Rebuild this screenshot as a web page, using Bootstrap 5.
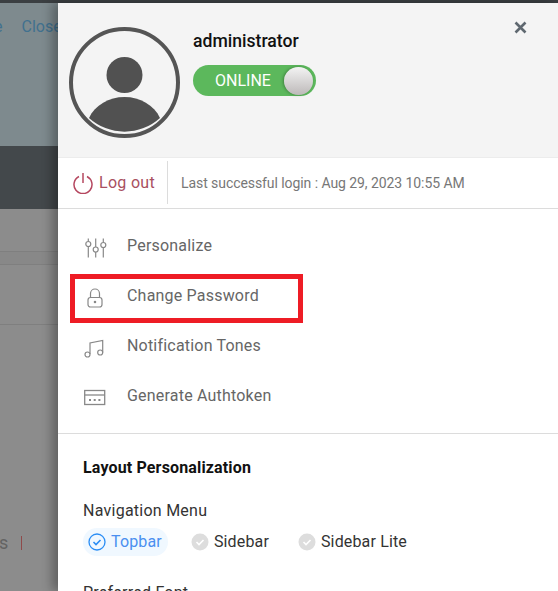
<!DOCTYPE html>
<html lang="en">
<head>
  <meta charset="UTF-8">
  <title>Profile</title>
  <link href="https://cdn.jsdelivr.net/npm/bootstrap@5.3.0/dist/css/bootstrap.min.css" rel="stylesheet">
  <style>
    html, body {
      height: 591px;
      overflow: hidden;
    }

    body {
      font-family: Roboto, "Liberation Sans", sans-serif;
      background-color: #8c8c8c;
    }

    .top-strip {
      height: 3px;
      background-color: #3b3f42;
    }

    .page-shell {
      height: 588px;
    }

    .behind {
      width: 58px;
      flex: none;
      overflow: hidden;
    }

    .behind-head {
      height: 143px;
      background-color: #7e8a8e;
      padding-top: 13px;
      font-size: 16px;
      line-height: 22px;
      color: #41718f;
      white-space: nowrap;
    }

    .behind-head span {
      margin-left: -6px;
      margin-right: 19px;
    }

    .behind-dark {
      height: 63px;
      background-color: #43484b;
    }

    .behind-row {
      height: 42px;
    }

    .behind-line {
      height: 14px;
      border-top: 1px solid #7f7f7f;
      background-color: #888;
      border-bottom: 1px solid #7f7f7f;
    }

    .behind-gap {
      height: 60px;
      border-bottom: 1px solid #7f7f7f;
    }

    .behind-foot {
      padding-top: 208px;
      font-size: 18px;
      line-height: 20px;
      color: #636363;
      white-space: nowrap;
    }

    .behind-foot span {
      margin-left: -1px;
      margin-right: 13px;
    }

    .behind-foot i {
      display: inline-block;
      width: 1px;
      height: 14px;
      background-color: #8f4a4a;
      vertical-align: -1px;
    }

    .panel-side {
      box-shadow: -6px 0 10px rgba(0, 0, 0, .3);
      position: relative;
    }

    .panel-head {
      height: 155px;
      background-color: #f4f4f4;
      border-bottom: 1px solid #ececec;
      padding: 24px 0 0 11px;
    }

    .user-pic {
      width: 111px;
      height: 111px;
      flex: none;
    }

    .user-info {
      margin-left: 13px;
      padding-top: 3px;
    }

    .user-name {
      font-size: 17.6px;
      line-height: 22px;
      font-weight: 500;
      color: #111;
    }

    .online-switch {
      width: 123px;
      height: 31px;
      margin-top: 13px;
      border-radius: 16px;
      background-color: #5cb85c;
      color: #fff;
      font-size: 16px;
      line-height: 31px;
      padding-left: 22px;
      position: relative;
    }

    .switch-knob {
      position: absolute;
      top: 2px;
      right: 3px;
      width: 29px;
      height: 28px;
      border-radius: 50%;
      background: linear-gradient(#f3f3f3, #bdb9b9);
      box-shadow: -1px 0 3px rgba(0, 0, 0, .3);
    }

    .panel-close {
      position: absolute;
      top: 18px;
      right: 31px;
      width: 13px;
      height: 13px;
    }

    .logout-bar {
      height: 51px;
      border-bottom: 1px solid #dcdcdc;
    }

    .logout-link {
      width: 110px;
      height: 43px;
      margin-top: 3px;
      padding-left: 15px;
      border-right: 1px solid #dcdcdc;
      color: #a9505f;
      font-size: 16px;
      letter-spacing: .3px;
      gap: 6px;
    }

    .last-login {
      margin-left: 13px;
      font-size: 14px;
      letter-spacing: -.07px;
      color: #777;
    }

    .menu-block {
      height: 225px;
      padding-top: 12px;
      border-bottom: 1px solid #dcdcdc;
    }

    .menu-row {
      height: 50px;
      padding-left: 26px;
      color: #666;
      font-size: 16px;
      letter-spacing: .2px;
    }

    .menu-ico {
      width: 23px;
      height: 23px;
      margin-right: 20px;
      flex: none;
    }

    .red-mark {
      position: absolute;
      left: 12px;
      top: 271px;
      width: 233px;
      height: 49px;
      border: 5px solid #ee1c25;
    }

    .layout-block {
      padding: 23px 0 0 25px;
    }

    .layout-title {
      font-size: 16px;
      line-height: 22px;
      font-weight: 700;
      letter-spacing: .15px;
      color: #111;
    }

    .field-label {
      font-size: 16px;
      line-height: 22px;
      letter-spacing: .25px;
      color: #333;
      margin-top: 21px;
    }

    .choice-row {
      margin-top: 6px;
    }

    .choice {
      height: 28px;
      padding: 0 6px 0 5px;
      font-size: 16px;
      letter-spacing: .15px;
      color: #333;
      gap: 5px;
      border-radius: 14px;
    }

    .choice.picked {
      background-color: #f0f8ff;
      color: #4a8ff0;
    }

    .choice svg {
      width: 18px;
      height: 18px;
      flex: none;
    }

    .choice-row .choice + .choice {
      margin-left: 18px;
    }

    .field-next {
      margin-top: 26px;
    }
  </style>
</head>
<body>
  <div class="top-strip"></div>
  <div class="page-shell d-flex">
    <div class="behind">
      <div class="behind-head"><span>e</span>Close</div>
      <div class="behind-dark"></div>
      <div class="behind-row"></div>
      <div class="behind-line"></div>
      <div class="behind-gap"></div>
      <div class="behind-foot"><span>s</span><i></i></div>
    </div>
    <div class="panel-side flex-grow-1 bg-white">
      <div class="panel-head d-flex">
        <svg class="user-pic" viewBox="0 0 111 111">
          <circle cx="55.5" cy="55.5" r="53.5" fill="none" stroke="#555" stroke-width="4"/>
          <circle cx="55.5" cy="48" r="18" fill="#515151"/>
          <path d="M20 91C26 78 40 70 55.500 70S85 78 91 91A53 53 0 0 1 20 91Z" fill="#515151"/>
        </svg>
        <div class="user-info">
          <div class="user-name">administrator</div>
          <div class="online-switch">ONLINE<span class="switch-knob"></span></div>
        </div>
      </div>
      <svg class="panel-close" viewBox="0 0 13 13">
        <path d="M1.500 1.500L11.500 11.500M11.500 1.500L1.500 11.500" stroke="#5f6870" stroke-width="2.600" fill="none"/>
      </svg>
      <div class="logout-bar d-flex">
        <div class="logout-link d-flex align-items-center">
          <svg width="20" height="22" viewBox="0 0 20 22" fill="none" stroke="#b5475f" stroke-width="1.500">
            <path d="M6 4.500A9 9 0 1 0 14 4.500"/>
            <path d="M10 1V11"/>
          </svg>
          <span>Log out</span>
        </div>
        <div class="last-login d-flex align-items-center">Last successful login : Aug 29, 2023 10:55 AM</div>
      </div>
      <div class="menu-block">
        <div class="menu-row d-flex align-items-center">
          <svg class="menu-ico" viewBox="0 0 23 23" fill="none" stroke="#888" stroke-width="1.200">
            <path d="M4.300 3.500V6.500M4.300 11.500V22.500M11.700 3.500V12M11.700 17V22.500M19.300 3.500V7.500M19.300 12.500V22.500"/>
            <circle cx="4.300" cy="9" r="2.500"/>
            <circle cx="11.700" cy="14.500" r="2.500"/>
            <circle cx="19.300" cy="10" r="2.500"/>
          </svg>
          <span>Personalize</span>
        </div>
        <div class="menu-row d-flex align-items-center">
          <svg class="menu-ico" viewBox="0 0 23 23" fill="none" stroke="#888" stroke-width="1.200">
            <rect x="4" y="12.500" width="14" height="9.500" rx="2.500"/>
            <path d="M6.500 12.500V8.500A4.500 4.500 0 0 1 15.500 8.500V12.500"/>
            <circle cx="11" cy="17" r=".7" fill="#888"/>
          </svg>
          <span>Change Password</span>
        </div>
        <div class="menu-row d-flex align-items-center">
          <svg class="menu-ico" viewBox="0 0 23 23" fill="none" stroke="#888" stroke-width="1.200">
            <path d="M6 19V8L18.700 5.500V17.500"/>
            <circle cx="3.500" cy="19.500" r="2.500"/>
            <circle cx="16.200" cy="17.500" r="2.500"/>
          </svg>
          <span>Notification Tones</span>
        </div>
        <div class="menu-row d-flex align-items-center">
          <svg class="menu-ico" viewBox="0 0 23 23" fill="none" stroke="#888" stroke-width="1.300">
            <rect x=".7" y="5.500" width="20" height="14"/>
            <path d="M.7 10H20.700"/>
            <path d="M5 15H7M9.700 15H11.700M14.400 15H16.400" stroke-width="1.800"/>
          </svg>
          <span>Generate Authtoken</span>
        </div>
      </div>
      <div class="red-mark"></div>
      <div class="layout-block">
        <div class="layout-title">Layout Personalization</div>
        <div class="field-label">Navigation Menu</div>
        <div class="choice-row d-flex">
          <div class="choice picked d-flex align-items-center">
            <svg viewBox="0 0 18 18" fill="none" stroke="#2a8df5" stroke-width="1.300">
              <circle cx="9" cy="9" r="8"/>
              <path d="M5.500 9L8 11.500L12.500 7" stroke-width="1.600"/>
            </svg>
            <span>Topbar</span>
          </div>
          <div class="choice d-flex align-items-center">
            <svg viewBox="0 0 18 18" fill="none">
              <circle cx="9" cy="9" r="8.500" fill="#ddd"/>
              <path d="M5.500 9L8 11.500L12.500 7" stroke="#fff" stroke-width="1.600"/>
            </svg>
            <span>Sidebar</span>
          </div>
          <div class="choice d-flex align-items-center">
            <svg viewBox="0 0 18 18" fill="none">
              <circle cx="9" cy="9" r="8.500" fill="#ddd"/>
              <path d="M5.500 9L8 11.500L12.500 7" stroke="#fff" stroke-width="1.600"/>
            </svg>
            <span>Sidebar Lite</span>
          </div>
        </div>
        <div class="field-label field-next">Preferred Font</div>
      </div>
    </div>
  </div>
  <script src="https://cdn.jsdelivr.net/npm/bootstrap@5.3.0/dist/js/bootstrap.bundle.min.js"></script>
</body>
</html>
